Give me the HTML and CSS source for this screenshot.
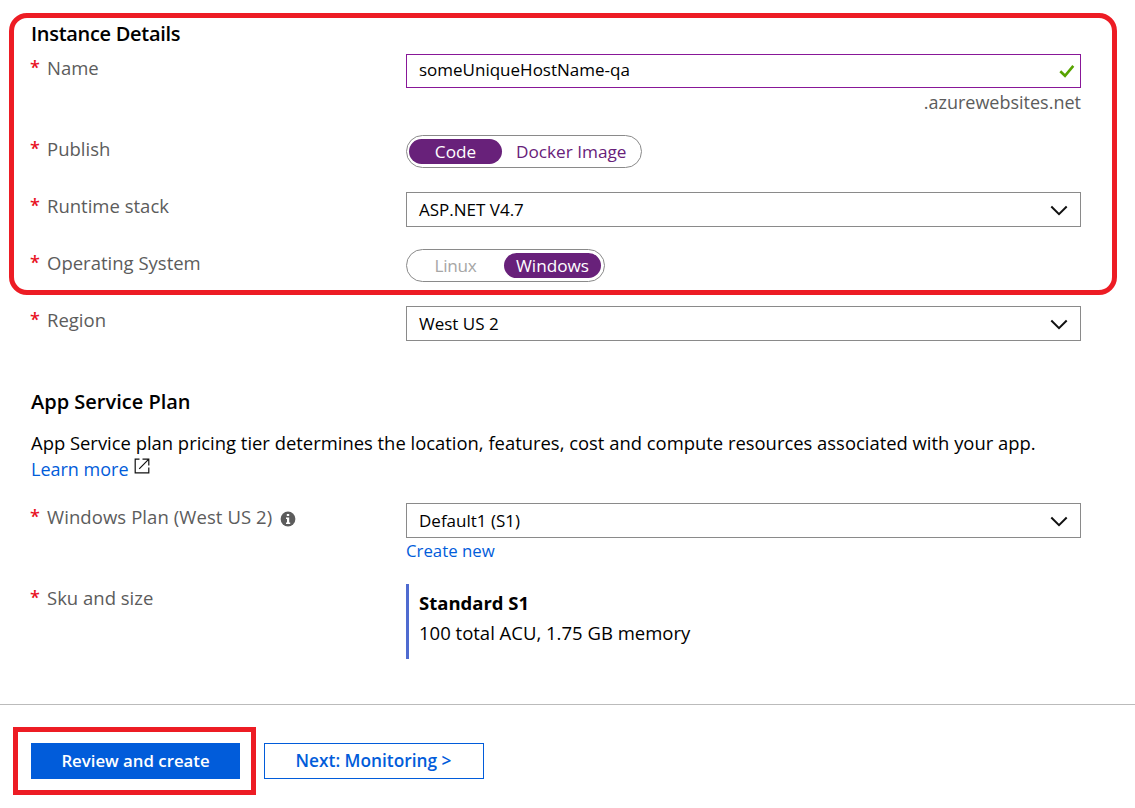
FILE: index.html
```html
<!DOCTYPE html>
<html lang="en">
<head>
<meta charset="utf-8">
<title>Create Web App</title>
<link rel="stylesheet" href="styles.css">
</head>
<body>
<main class="form">
  <h2 class="heading instance-heading">Instance Details</h2>
  <div class="row row-tall">
    <div class="label"><i class="req">*</i><span>Name</span></div>
    <div class="control">
      <div class="box input"><span class="value">someUniqueHostName-qa</span>
        <svg class="check" viewBox="0 0 16 14" width="16" height="14"><path d="M1.3 7.2 6 11.8 14.300 1.8" fill="none" stroke="#57a300" stroke-width="2.6"/></svg>
      </div>
      <div class="suffix">.azurewebsites.net</div>
    </div>
  </div>
  <div class="row">
    <div class="label"><i class="req">*</i><span>Publish</span></div>
    <div class="toggle toggle-publish"><div class="pill on pill-first">Code</div><div class="pill docker">Docker Image</div></div>
  </div>
  <div class="row">
    <div class="label"><i class="req">*</i><span>Runtime stack</span></div>
    <div class="box"><span class="value">ASP.NET V4.7</span><svg class="chevron" viewBox="0 0 18 11" width="18" height="11"><path d="M1.300 1.5 9 9.200 16.700 1.5" fill="none" stroke="#111" stroke-width="2"/></svg></div>
  </div>
  <div class="row">
    <div class="label"><i class="req">*</i><span>Operating System</span></div>
    <div class="toggle toggle-os"><div class="pill off pill-first">Linux</div><div class="pill on windows">Windows</div></div>
  </div>
  <div class="row row-region">
    <div class="label"><i class="req">*</i><span>Region</span></div>
    <div class="box"><span class="value">West US 2</span><svg class="chevron" viewBox="0 0 18 11" width="18" height="11"><path d="M1.300 1.5 9 9.200 16.700 1.5" fill="none" stroke="#111" stroke-width="2"/></svg></div>
  </div>
  <h2 class="heading plan-heading">App Service Plan</h2>
  <div class="desc">
    <div>App Service plan pricing tier determines the location, features, cost and compute resources associated with your app.</div>
    <div class="learn"><span class="link">Learn more</span><svg class="external" viewBox="0 0 16 16" width="16" height="16"><path d="M5.500 1.200H1.200v13.600h13.600V9.500M8.500 1.200h6.300v6.300M14.800 1.200 5.200 10.800" fill="none" stroke="#111" stroke-width="1.2"/></svg></div>
  </div>
  <div class="row row-tall">
    <div class="label"><i class="req">*</i><span class="plan-label">Windows Plan (West US 2)</span><svg class="info" viewBox="0 0 16 16" width="16" height="16"><circle cx="8" cy="8" r="7.400" fill="#5c5c5c"/><path d="M6.800 3h2.400v2H6.800zM6 6.500h3.200v5h1V13H6v-1.500h1V8H6z" fill="#fff"/></svg></div>
    <div class="control">
      <div class="box"><span class="value">Default1 (S1)</span><svg class="chevron" viewBox="0 0 18 11" width="18" height="11"><path d="M1.300 1.5 9 9.200 16.700 1.5" fill="none" stroke="#111" stroke-width="2"/></svg></div>
      <div class="create"><span class="link">Create new</span></div>
    </div>
  </div>
  <div class="row row-sku">
    <div class="label"><i class="req">*</i><span>Sku and size</span></div>
    <div class="sku"><div class="sku-name">Standard S1</div><div>100 total ACU, 1.75 GB memory</div></div>
  </div>
  <div class="highlight highlight-details"></div>
</main>
<footer class="footer">
  <div class="btn primary">Review and create</div>
  <div class="btn secondary">Next: Monitoring &gt;</div>
  <div class="highlight highlight-create"></div>
</footer>
</body>
</html>
```
FILE: styles.css
```css
* { box-sizing: border-box; }
body { margin: 0; background: #fff; color: #000; font-family: "Open Sans", "Noto Sans", sans-serif; font-size: 18px; width: 1135px; height: 808px; overflow: hidden; }
.form { position: relative; height: 704px; padding: 20px 54px 0 31px; }
.heading { margin: 0; font-size: 20px; font-weight: 600; line-height: 26px; white-space: nowrap; }
.instance-heading { height: 34px; line-height: 28px; letter-spacing: -0.3px; }
.row { display: grid; grid-template-columns: 375px 675px; align-items: start; height: 57px; }
.row-tall { height: 81px; }
.row-region { height: 83px; }
.label { display: flex; color: #5c5c5c; line-height: 28px; white-space: nowrap; font-size: 18.5px; }
.req { width: 16px; color: #e81123; font-style: normal; font-size: 18px; font-weight: 600; line-height: 27px; text-indent: -1px; }
.plan-label { letter-spacing: 0.08px; }
.info { margin: 8px 0 0 8px; }
.box { display: flex; align-items: center; justify-content: space-between; height: 35px; border: 1px solid #8a8a8a; padding: 0 12px; font-size: 17px; }
.chevron { margin-top: 1px; }
.input { height: 34px; border-color: #881798; padding-right: 5px; }
.input .value { padding-bottom: 3px; }
.suffix { text-align: right; color: #5c5c5c; line-height: 28px; }
.toggle { display: flex; width: 236px; height: 33px; padding: 3px 2px; border: 1px solid #8a8a8a; border-radius: 17px; color: #68217a; font-size: 17.2px; line-height: 25px; }
.toggle-os { width: 199px; }
.pill { flex: none; border-radius: 13px; text-align: center; }
.pill-first { width: 93px; }
.docker { padding-left: 14px; }
.windows { width: 97px; margin-left: 2px; }
.on { background: #68217a; color: #fff; }
.off { color: #a6a6a6; letter-spacing: -0.3px; }
.plan-heading { height: 41px; }
.desc { height: 73px; line-height: 26px; white-space: nowrap; font-size: 18.42px; }
.learn { display: flex; font-size: 18px; }
.external { margin: 2px 0 0 5px; }
.link { color: #015cda; }
.create { font-size: 16.8px; line-height: 26px; }
.sku { height: 75px; border-left: 3px solid #4f6bd0; padding: 4px 10px; line-height: 30px; font-size: 18.5px; }
.sku-name { font-weight: 700; font-size: 18.5px; letter-spacing: 0; }
.footer { position: relative; display: flex; gap: 24px; height: 104px; border-top: 1px solid #bbb; padding: 38px 31px; }
.btn { display: flex; align-items: center; justify-content: center; width: 209px; height: 36px; padding-bottom: 2px; background: #015cda; color: #fff; font-weight: 600; font-size: 16.8px; }
.secondary { width: 220px; background: #fff; color: #015cda; border: 1px solid #015cda; font-size: 17.3px; padding-right: 1px; padding-bottom: 1px; }
.highlight { position: absolute; border: 5px solid #ed1c24; pointer-events: none; }
.highlight-details { left: 9px; top: 13px; width: 1108px; height: 282px; border-radius: 18px; }
.highlight-create { left: 13px; top: 22px; width: 243px; height: 68px; }
```
